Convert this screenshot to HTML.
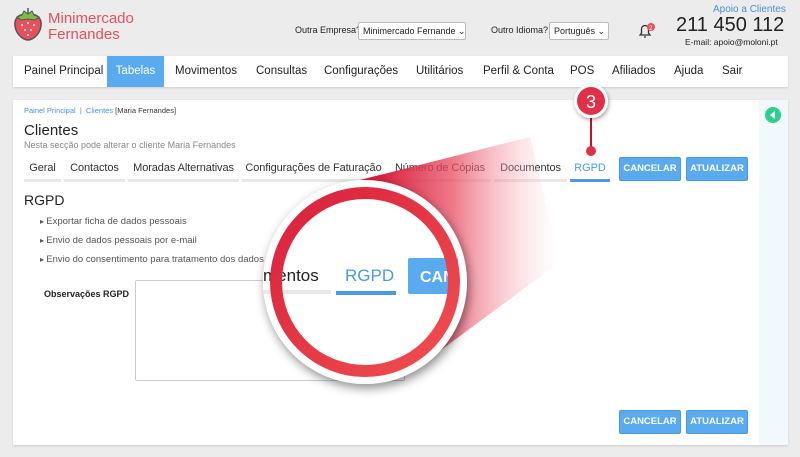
<!DOCTYPE html>
<html><head><meta charset="utf-8"><style>
*{box-sizing:border-box;margin:0;padding:0}
body{width:800px;height:457px;background:#ececec;font-family:"Liberation Sans","DejaVu Sans",sans-serif;position:relative;overflow:hidden;color:#333}
.a{position:absolute;white-space:nowrap}
.sel{position:absolute;height:18px;border:1px solid #bbb;background:#fff;border-radius:2px;font-size:9px;padding:3px 4px;color:#222;white-space:nowrap;overflow:hidden}
.nav{position:absolute;left:13px;top:56px;width:775px;height:31px;background:#fff;box-shadow:0 1px 2px #ccc}
.nav span{position:absolute;top:0;height:31px;line-height:31px;font-size:11.5px;color:#222;white-space:nowrap}
.panel{position:absolute;left:13px;top:100px;width:775px;height:345px;background:#fff;box-shadow:0 1px 2px #ccc}
.tab{position:absolute;top:162px;font-size:11px;color:#333;height:20px;border-bottom:3px solid #e8e8e8;text-align:center;white-space:nowrap;overflow:hidden;letter-spacing:-0.1px}
.btn{position:absolute;height:24px;background:#5aaaf0;color:#fff;font-size:9.5px;font-weight:bold;line-height:22px;text-align:center;border-radius:2px;border:1px solid #4a9ae0;white-space:nowrap}
.li{position:absolute;left:40px;font-size:9.5px;color:#555;white-space:nowrap}
.li:before{content:"▸ ";font-size:8px;color:#555}
</style></head><body>
<svg class="a" style="left:12px;top:6px" width="32" height="36" viewBox="0 0 32 36">
<path d="M16 9C7 7 2 12 3 20c1 8 8 14 13 14s12-6 13-14C30 12 25 7 16 9z" fill="#e8505b" stroke="#555" stroke-width="1.5"/>
<path d="M5 11l5-2 2-4 4 3 4-3 2 4 5 2-4 3-7-1-7 1z" fill="#7cbd4a" stroke="#555" stroke-width="1"/>
<path d="M16 8V2" stroke="#555" stroke-width="1.5"/>
<g fill="#fff"><circle cx="10" cy="19" r="1"/><circle cx="16" cy="17" r="1"/><circle cx="22" cy="19" r="1"/><circle cx="13" cy="24" r="1"/><circle cx="19" cy="24" r="1"/><circle cx="16" cy="29" r="1"/></g></svg>
<div class="a" style="left:48px;top:11px;font-size:15px;color:#e8505b;line-height:16px">Minimercado<br>Fernandes</div>
<div class="a" style="left:295px;top:25px;font-size:9px;color:#222">Outra Empresa?</div>
<div class="sel" style="left:358px;top:22px;width:108px">Minimercado Fernande ⌄</div>
<div class="a" style="left:491px;top:25px;font-size:9px;color:#222">Outro Idioma?</div>
<div class="sel" style="left:549px;top:22px;width:60px">Português ⌄</div>
<svg class="a" style="left:637px;top:22px" width="20" height="18"><path d="M3 13h10l-1.5-2V7a3.5 3.5 0 0 0-7 0v4z" fill="none" stroke="#333" stroke-width="1.3"/><path d="M7 15h2" stroke="#333" stroke-width="1.3"/><circle cx="14" cy="5" r="4" fill="#e8505b"/><text x="12" y="8" font-size="6" fill="#fff">2</text></svg>
<div class="a" style="left:713px;top:4px;font-size:10px;color:#4a8ee0">Apoio a Clientes</div>
<div class="a" style="left:676px;top:14px;font-size:20px;color:#222">211 450 112</div>
<div class="a" style="left:685px;top:37px;font-size:8.5px;color:#222">E-mail: apoio@moloni.pt</div>
<div class="nav">
<span style="left:11px">Painel Principal</span>
<span style="left:94px;width:57px;background:#5aaaf0;color:#fff;text-align:center">Tabelas</span>
<span style="left:162px">Movimentos</span><span style="left:243px">Consultas</span><span style="left:311px">Configurações</span><span style="left:403px">Utilitários</span><span style="left:470px">Perfil &amp; Conta</span><span style="left:557px">POS</span><span style="left:599px">Afiliados</span><span style="left:661px">Ajuda</span><span style="left:709px">Sair</span>
</div>
<div class="panel"><div class="a" style="left:746px;top:0;width:29px;height:345px;background:#f2f9fd"></div></div>
<div class="a" style="left:765px;top:107px;width:16px;height:16px;border-radius:50%;background:#2dd08a"></div>
<div class="a" style="left:770px;top:111px;width:0;height:0;border-top:4px solid transparent;border-bottom:4px solid transparent;border-right:5px solid #fff"></div>
<div class="a" style="left:24px;top:106px;font-size:7.5px;color:#4a8ee0">Painel Principal &nbsp;| &nbsp;Clientes <span style="color:#333">[Maria Fernandes]</span></div>
<div class="a" style="left:24px;top:122px;font-size:15px;color:#222">Clientes</div>
<div class="a" style="left:24px;top:140px;font-size:9px;color:#888">Nesta secção pode alterar o cliente Maria Fernandes</div>
<div class="tab" style="left:24px;width:37px">Geral</div>
<div class="tab" style="left:64px;width:61px">Contactos</div>
<div class="tab" style="left:128px;width:111px">Moradas Alternativas</div>
<div class="tab" style="left:242px;width:143px">Configurações de Faturação</div>
<div class="tab" style="left:389px;width:102px">Número de Cópias</div>
<div class="tab" style="left:494px;width:73px">Documentos</div>
<div class="tab" style="left:570px;width:40px;color:#4a9ae8;border-bottom-color:#4a9ae8">RGPD</div>
<div class="btn" style="left:619px;top:157px;width:62px">CANCELAR</div>
<div class="btn" style="left:686px;top:157px;width:62px">ATUALIZAR</div>
<div class="a" style="left:24px;top:192px;font-size:14px;color:#222">RGPD</div>
<div class="li" style="top:216px">Exportar ficha de dados pessoais</div>
<div class="li" style="top:235px">Envio de dados pessoais por e-mail</div>
<div class="li" style="top:254px">Envio do consentimento para tratamento dos dados</div>
<div class="a" style="left:44px;top:289px;font-size:9px;font-weight:bold;color:#222">Observações RGPD</div>
<div class="a" style="left:135px;top:280px;width:270px;height:101px;border:1px solid #ccc;border-radius:2px"></div>
<div class="btn" style="left:619px;top:410px;width:62px">CANCELAR</div>
<div class="btn" style="left:686px;top:410px;width:62px">ATUALIZAR</div>
<svg class="a" style="left:0;top:0" width="800" height="457">
<defs><linearGradient id="g" gradientUnits="userSpaceOnUse" x1="380" y1="0" x2="560" y2="0"><stop offset="0" stop-color="#d8203c" stop-opacity="1"/><stop offset="0.4" stop-color="#e84a60" stop-opacity=".75"/><stop offset="0.75" stop-color="#f39aa5" stop-opacity=".35"/><stop offset="1" stop-color="#fbd0d5" stop-opacity="0"/></linearGradient>
<linearGradient id="r" x1="0" y1="0" x2="1" y2="1"><stop offset="0" stop-color="#d8203c"/><stop offset="1" stop-color="#f05050"/></linearGradient>
<filter id="s" x="-50%" y="-50%" width="200%" height="200%"><feDropShadow dx="2" dy="4" stdDeviation="5" flood-opacity=".45"/></filter>
<filter id="s2" x="-80%" y="-80%" width="260%" height="260%"><feDropShadow dx="1" dy="2" stdDeviation="2" flood-opacity=".35"/></filter></defs>
<polygon points="360,180 530,137 560,262 437,353" fill="url(#g)"/>
<g filter="url(#s)"><circle cx="365" cy="282" r="102" fill="#fff"/></g>
<text x="263" y="281" font-size="17" fill="#222" font-family="Liberation Sans">mentos</text>
<rect x="263" y="290" width="68" height="4" fill="#e8e8e8"/>
<text x="345" y="281" font-size="17" fill="#4a9ae8" font-family="Liberation Sans">RGPD</text>
<rect x="336" y="291" width="60" height="4" fill="#4a9ae8"/>
<rect x="408" y="258" width="50" height="36" rx="2" fill="#5aaaf0"/>
<text x="420" y="282" font-size="16" fill="#fff" font-weight="bold" font-family="Liberation Sans">CAN</text>
<circle cx="365" cy="282" r="89" fill="none" stroke="url(#r)" stroke-width="12"/>
<line x1="591" y1="110" x2="591" y2="150" stroke="#c8102e" stroke-width="2"/>
<circle cx="591" cy="151" r="5" fill="#e03048"/>
<g filter="url(#s2)"><circle cx="591" cy="101" r="17" fill="#fff"/></g>
<circle cx="591" cy="101" r="14" fill="#e03048"/>
<text x="591" y="108" font-size="18" fill="#fff" text-anchor="middle" font-family="Liberation Sans">3</text>
</svg>
</body></html>
